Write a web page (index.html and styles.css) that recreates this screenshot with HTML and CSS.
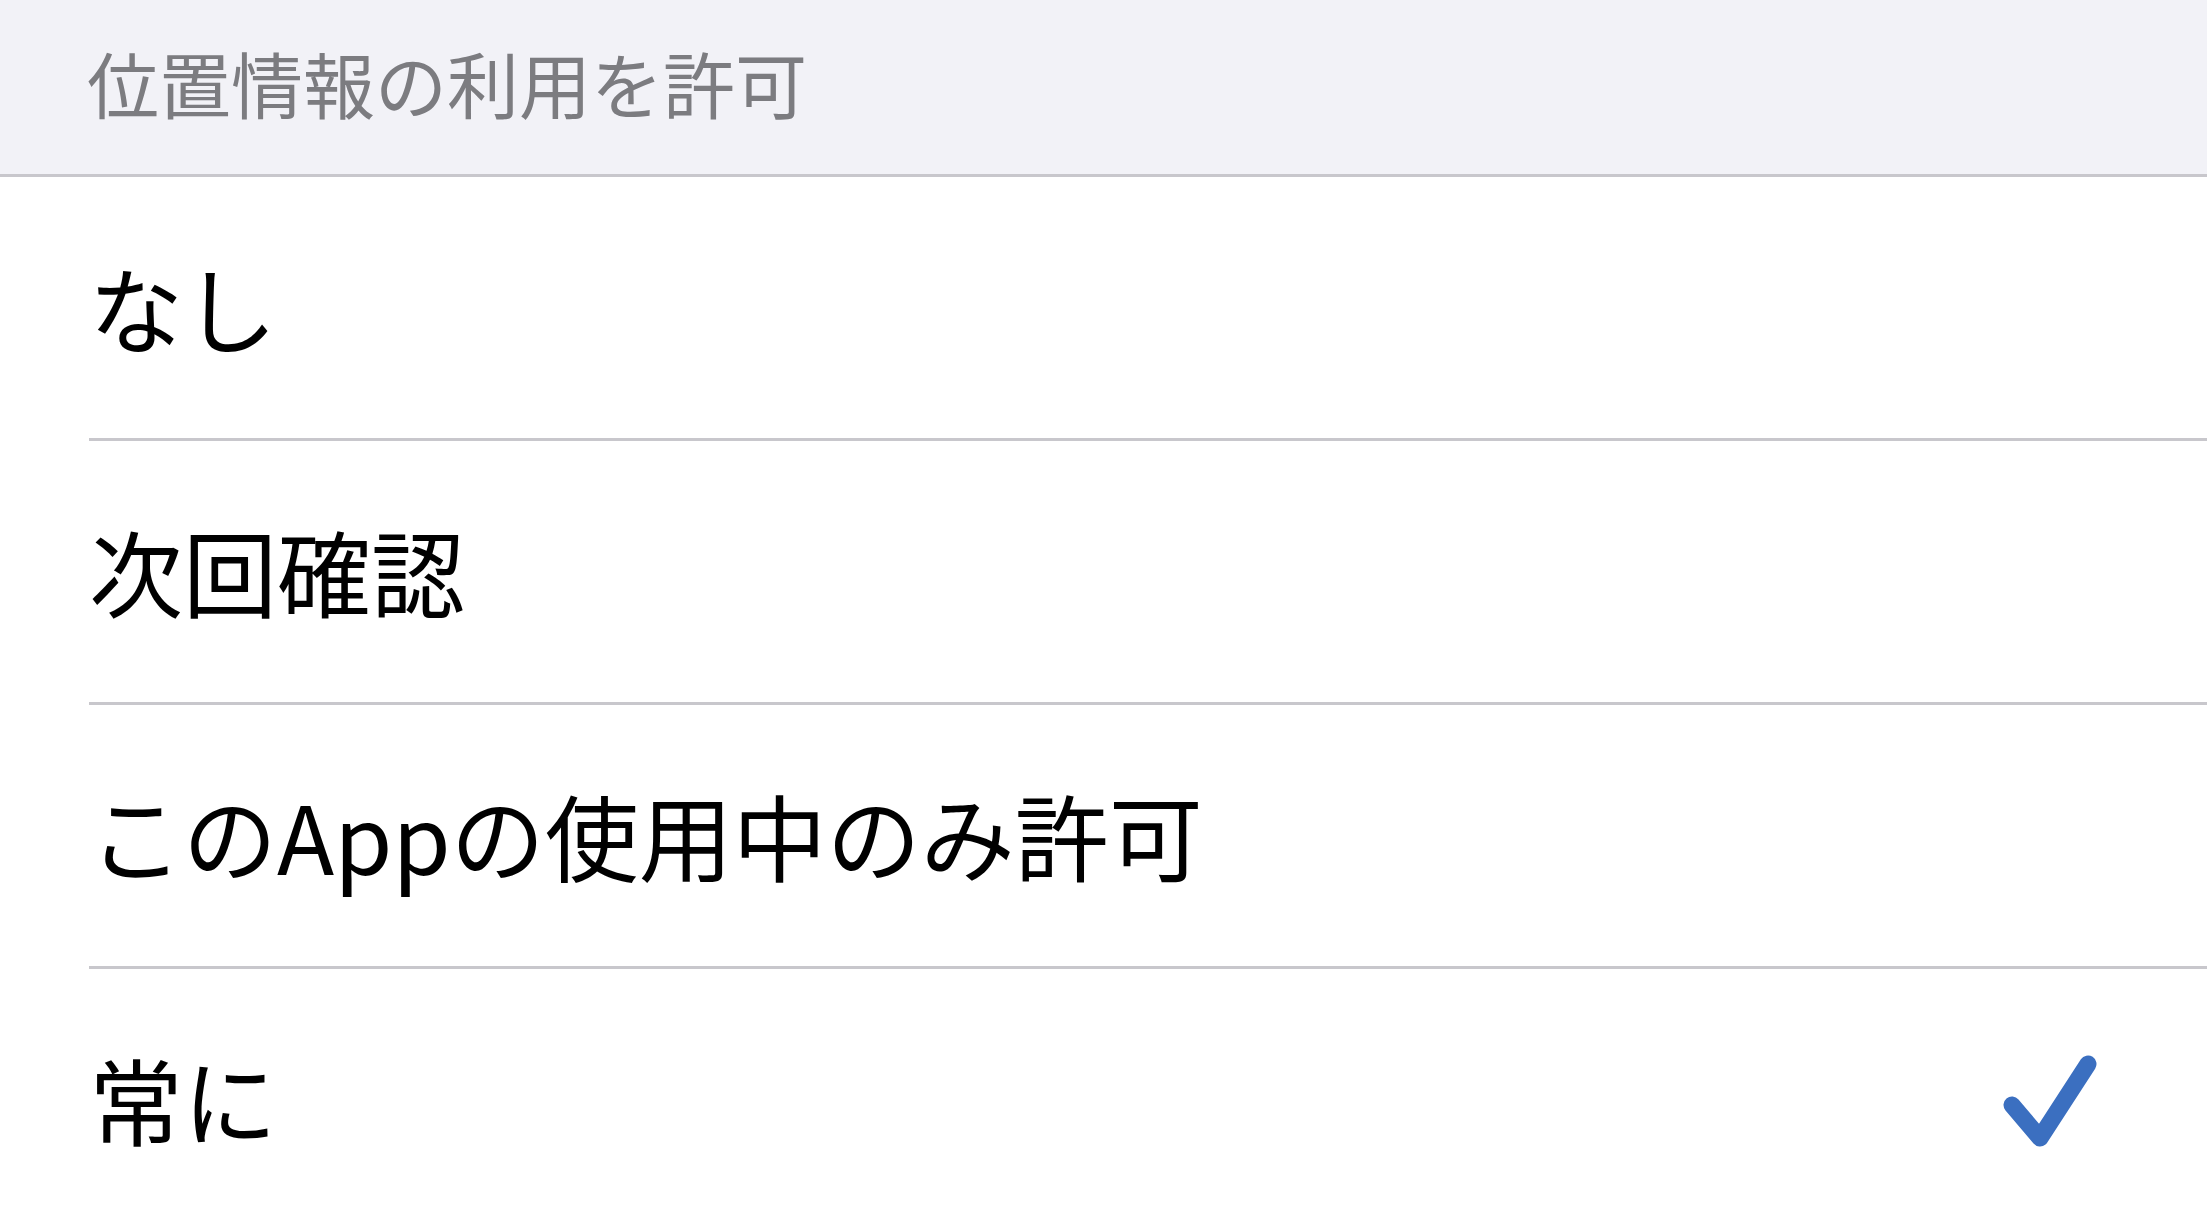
FILE: index.html
```html
<!DOCTYPE html>
<html lang="ja">
<head>
<meta charset="utf-8">
<title>位置情報の利用を許可</title>
<link rel="stylesheet" href="styles.css">
</head>
<body>
  <div class="screen">
    <header class="section-header">
      <span class="section-title">位置情報の利用を許可</span>
    </header>
    <ul class="options">
      <li class="option"><span class="label">なし</span></li>
      <li class="option"><span class="label">次回確認</span></li>
      <li class="option"><span class="label">このAppの使用中のみ許可</span></li>
      <li class="option option-last">
        <span class="label">常に</span>
        <svg class="check" width="100" height="100" viewBox="0 0 100 100" aria-hidden="true">
          <path d="M12 57 L40 90 L88 16" fill="none" stroke="#3b6fc0" stroke-width="17" stroke-linecap="round" stroke-linejoin="round"/>
        </svg>
      </li>
    </ul>
  </div>
</body>
</html>
```

FILE: styles.css
```css
html, body {
  margin: 0;
  padding: 0;
  background: #ffffff;
}

body {
  font-family: "Noto Sans CJK JP", "Noto Sans", sans-serif;
  overflow: hidden;
}

.screen {
  width: 2207px;
  height: 1231px;
  display: flex;
  flex-direction: column;
}

.section-header {
  height: 164px;
  padding-bottom: 10px;
  background: #f2f2f7;
  border-bottom: 3px solid #c8c7cc;
  display: flex;
  align-items: center;
  padding-left: 87px;
  flex-shrink: 0;
}

.section-title {
  font-size: 72px;
  line-height: 1;
  color: #7c7c80;
}

.options {
  list-style: none;
  margin: 0;
  padding: 0;
  background: #ffffff;
}

.option {
  margin-left: 89px;
  height: 257px;
  padding-bottom: 4px;
  border-bottom: 3px solid #c8c7cc;
  display: flex;
  align-items: center;
  justify-content: space-between;
  padding-right: 107px;
}

.option-last {
  border-bottom: none;
}

.label {
  font-size: 94px;
  line-height: 1;
  color: #000000;
}

.check {
  display: block;
  flex-shrink: 0;
}
```
